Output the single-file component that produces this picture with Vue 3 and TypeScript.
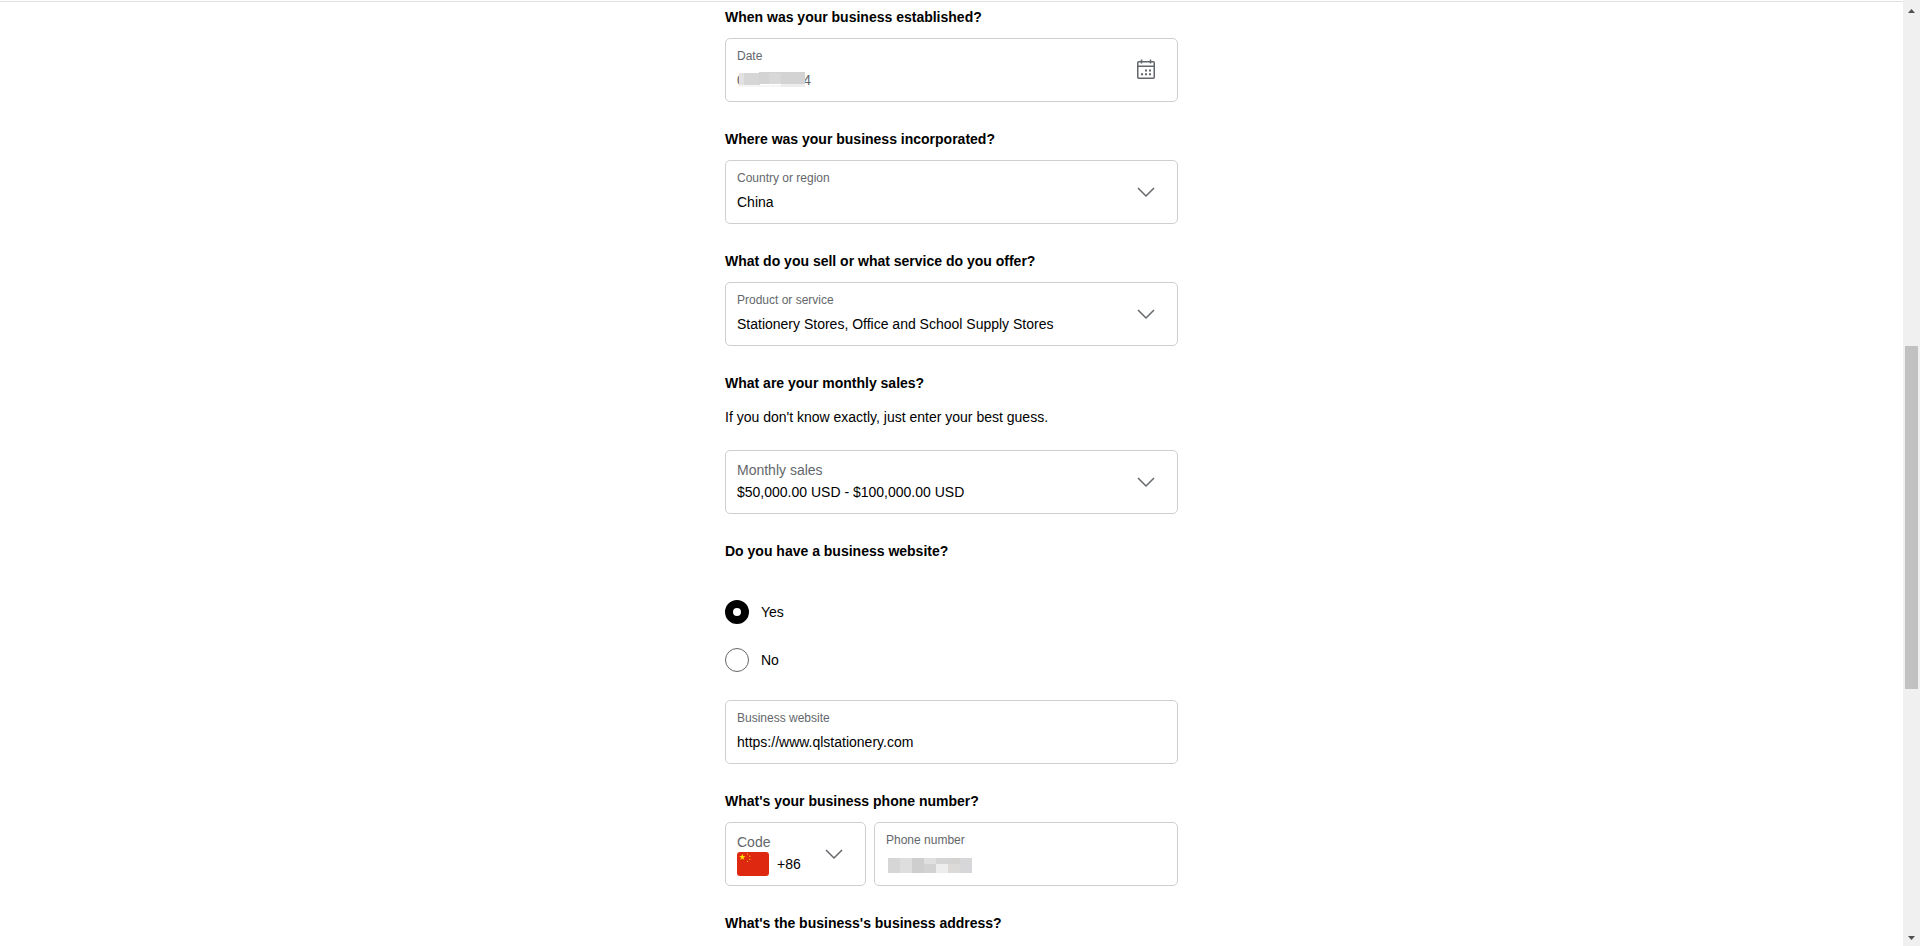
<script setup lang="ts">
import { ref } from 'vue'

interface Tile {
  x: number
  y: number
  w: number
  h: number
  fill: string
}

const established = ref('0' + '\u00a0'.repeat(15) + '4')
const country = ref('China')
const product = ref('Stationery Stores, Office and School Supply Stores')
const sales = ref('$50,000.00 USD - $100,000.00 USD')
const hasWebsite = ref('yes')
const website = ref('https://www.qlstationery.com')
const code = ref('+86')
const phone = ref('')

const dateTiles: Tile[] = [
  { x: 0, y: 1, w: 6, h: 12, fill: '#e2e2e2' },
  { x: 5, y: 1, w: 16, h: 12, fill: '#d6d6d7' },
  { x: 20, y: 0, w: 46, h: 12, fill: '#d3d3d4' },
  { x: 30, y: 1, w: 12, h: 11, fill: '#d8d8d8' },
  { x: 0, y: 13, w: 42, h: 2, fill: '#f5f5f5' },
  { x: 42, y: 12, w: 24, h: 3, fill: '#ededee' },
]

const phoneTiles: Tile[] = [
  { x: 0, y: 0, w: 12, h: 15, fill: '#d6d6d7' },
  { x: 12, y: 0, w: 12, h: 15, fill: '#dedede' },
  { x: 24, y: 0, w: 12, h: 15, fill: '#cecece' },
  { x: 36, y: 0, w: 12, h: 6, fill: '#e0e0e0' },
  { x: 36, y: 6, w: 12, h: 9, fill: '#d2d2d2' },
  { x: 48, y: 0, w: 12, h: 6, fill: '#d5d5d5' },
  { x: 48, y: 6, w: 12, h: 9, fill: '#ededed' },
  { x: 60, y: 0, w: 12, h: 6, fill: '#d4d3d2' },
  { x: 60, y: 6, w: 12, h: 9, fill: '#dcdad8' },
  { x: 72, y: 0, w: 12, h: 15, fill: '#d7d7da' },
]
</script>

<template>
  <div class="page">
    <main class="content">
      <form class="form" @submit.prevent>
        <section class="group">
          <h2>When was your business established?</h2>
          <div class="field">
            <label for="established">Date</label>
            <input id="established" v-model="established" class="muted" type="text" />
            <svg class="mask date-mask" width="66" height="15" aria-hidden="true">
              <rect v-for="(t, i) in dateTiles" :key="i" :x="t.x" :y="t.y" :width="t.w" :height="t.h" :fill="t.fill" />
            </svg>
            <button class="calendar" type="button" aria-label="Choose date">
              <svg width="20" height="22" viewBox="0 0 20 22" fill="none" stroke="#63676b">
                <rect x="1.75" y="3.75" width="16.5" height="16.5" rx="1" stroke-width="1.5" />
                <path d="M1.5 8.25h17M5.5 1.5v4M14.5 1.5v4" stroke-width="1.5" />
                <path d="M9 12.5h2M13 12.5h2M5 16.25h2M9 16.25h2M13 16.25h2" stroke-width="2" />
              </svg>
            </button>
          </div>
        </section>

        <section class="group">
          <h2>Where was your business incorporated?</h2>
          <div class="field">
            <label for="country">Country or region</label>
            <select id="country" v-model="country"><option>China</option></select>
            <svg class="chevron" width="18" height="11" viewBox="0 0 18 11"><path d="M1 1l8 8 8-8" /></svg>
          </div>
        </section>

        <section class="group">
          <h2>What do you sell or what service do you offer?</h2>
          <div class="field">
            <label for="product">Product or service</label>
            <select id="product" v-model="product">
              <option>Stationery Stores, Office and School Supply Stores</option>
            </select>
            <svg class="chevron" width="18" height="11" viewBox="0 0 18 11"><path d="M1 1l8 8 8-8" /></svg>
          </div>
        </section>

        <section class="group">
          <h2>What are your monthly sales?</h2>
          <p class="hint">If you don't know exactly, just enter your best guess.</p>
          <div class="field large">
            <label for="sales">Monthly sales</label>
            <select id="sales" v-model="sales"><option>$50,000.00 USD - $100,000.00 USD</option></select>
            <svg class="chevron" width="18" height="11" viewBox="0 0 18 11"><path d="M1 1l8 8 8-8" /></svg>
          </div>
        </section>

        <section class="group">
          <h2 id="website-question">Do you have a business website?</h2>
          <div class="radios" role="radiogroup" aria-labelledby="website-question">
            <label class="radio"><input v-model="hasWebsite" type="radio" name="has-website" value="yes" />Yes</label>
            <label class="radio"><input v-model="hasWebsite" type="radio" name="has-website" value="no" />No</label>
          </div>
          <div class="field">
            <label for="website">Business website</label>
            <input id="website" v-model="website" type="text" />
          </div>
        </section>

        <section class="group">
          <h2>What's your business phone number?</h2>
          <div class="phone">
            <div class="field large code">
              <label for="code">Code</label>
              <div class="dial">
                <svg class="flag" width="32" height="24" viewBox="0 0 32 24" aria-hidden="true">
                  <rect width="32" height="24" rx="3" fill="#de2910" />
                  <g fill="#ffde00">
                    <path d="M5.3 1.8l.8 2.3h2.4L6.6 5.6l.7 2.4-2-1.4-2 1.400.7-2.400L2.100 4.100h2.400z" />
                    <circle cx="10.500" cy="2" r=".6" />
                    <circle cx="12.800" cy="4.200" r=".6" />
                    <circle cx="12.800" cy="7.300" r=".6" />
                    <circle cx="10.500" cy="9.500" r=".6" />
                  </g>
                </svg>
                <select id="code" v-model="code"><option>+86</option></select>
              </div>
              <svg class="chevron" width="18" height="11" viewBox="0 0 18 11"><path d="M1 1l8 8 8-8" /></svg>
            </div>
            <div class="field number">
              <label for="phone">Phone number</label>
              <input id="phone" v-model="phone" type="tel" />
              <svg class="mask phone-mask" width="84" height="15" aria-hidden="true">
                <rect v-for="(t, i) in phoneTiles" :key="i" :x="t.x" :y="t.y" :width="t.w" :height="t.h" :fill="t.fill" />
              </svg>
            </div>
          </div>
        </section>

        <section class="group">
          <h2>What's the business's business address?</h2>
        </section>
      </form>
    </main>
    <div class="scrollbar" aria-hidden="true">
      <svg width="17" height="17" viewBox="0 0 17 17"><path d="M5 13l3.500-4 3.500 4z" /></svg>
      <div class="track"><div class="thumb"></div></div>
      <svg width="17" height="17" viewBox="0 0 17 17"><path d="M5 7l3.500 4L12 7z" /></svg>
    </div>
  </div>
</template>

<style>
body {
  margin: 0;
  overflow: hidden;
}
</style>

<style scoped>
* {
  box-sizing: border-box;
}
.page {
  display: flex;
  height: 100vh;
  overflow: hidden;
  background: #fff;
  color: #000;
  font-family: 'Liberation Sans', Arial, sans-serif;
  font-size: 14px;
  line-height: 20px;
}
.content {
  flex: 1;
  margin-top: 1px;
  border-top: 1px solid #dfe1df;
  overflow: hidden;
  padding: 0 16px;
}
.form {
  width: 100%;
  max-width: 453px;
  margin: 0 auto;
  padding-top: 5px;
}
.group {
  margin-bottom: 27px;
}
h2 {
  margin: 0 0 11px;
  font-size: 14px;
  line-height: 20px;
  font-weight: 700;
}
.hint {
  margin: 14px 0 23px;
}
.field {
  position: relative;
  display: flex;
  flex-direction: column;
  height: 64px;
  padding: 7px 11px 0;
  border: 1px solid #cdcfd1;
  border-radius: 5px;
}
.field > label {
  font-size: 12px;
  line-height: 20px;
  color: #63676b;
}
.field > input,
.field select {
  width: 100%;
  height: 24px;
  margin: 2px 0 0;
  padding: 0;
  border: 0;
  outline: 0;
  appearance: none;
  background: transparent;
  color: #000;
  font: inherit;
}
.field > .muted {
  color: #63676b;
}
.large > label {
  padding-top: 2px;
  font-size: 14px;
  line-height: 20px;
}
.field.large select {
  height: 24px;
  margin: 0;
}
.mask {
  position: absolute;
}
.date-mask {
  left: 13px;
  top: 33px;
}
.phone-mask {
  left: 13px;
  top: 35px;
}
.calendar {
  position: absolute;
  top: 19px;
  right: 21px;
  display: flex;
  padding: 0;
  border: 0;
  background: none;
}
.chevron {
  position: absolute;
  top: 26px;
  right: 22px;
  fill: none;
  stroke: #63676b;
  stroke-width: 1.5;
  pointer-events: none;
}
.radios {
  display: flex;
  flex-direction: column;
  gap: 24px;
  padding: 28px 0;
}
.radio {
  display: flex;
  align-items: center;
  gap: 12px;
}
.radio input {
  width: 24px;
  height: 24px;
  margin: 0;
  appearance: none;
  border: 1px solid #63676b;
  border-radius: 50%;
}
.radio input:checked {
  border: 8px solid #000;
}
.phone {
  display: flex;
  gap: 8px;
}
.code {
  width: 141px;
}
.number {
  flex: 1;
}
.dial {
  display: flex;
  gap: 8px;
}
.flag {
  flex: none;
}
.scrollbar {
  display: flex;
  flex-direction: column;
  width: 17px;
  background: #f0f0f0;
}
.scrollbar svg {
  flex: none;
  fill: #505050;
}
.track {
  flex: 1;
  padding: 0 2px;
}
.thumb {
  height: 343px;
  margin-top: 329px;
  background: #c1c1c1;
}
</style>
